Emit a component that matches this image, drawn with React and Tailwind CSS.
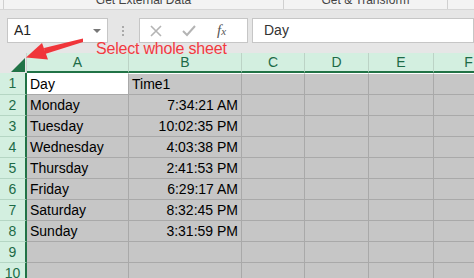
import React from 'react';

const columns = [
  { name: 'A', w: 'w-[102px]' },
  { name: 'B', w: 'w-[113px]' },
  { name: 'C', w: 'w-[63px]' },
  { name: 'D', w: 'w-[64px]' },
  { name: 'E', w: 'w-[65px]' },
  { name: 'F', w: 'w-[70px]' },
];

const data = [
  ['Day', 'Time1'],
  ['Monday', '7:34:21 AM'],
  ['Tuesday', '10:02:35 PM'],
  ['Wednesday', '4:03:38 PM'],
  ['Thursday', '2:41:53 PM'],
  ['Friday', '6:29:17 AM'],
  ['Saturday', '8:32:45 PM'],
  ['Sunday', '3:31:59 PM'],
  ['', ''],
  ['', ''],
];

const FormulaBar = () => (
  <div className="flex h-[43px] pt-[8px] bg-[#e6e6e6]">
    {/* name box */}
    <div className="ml-[7px] w-[101px] h-[25px] bg-white border border-[#c6c6c6] flex items-center justify-between pl-[6px] pr-[6px]">
      <span className="text-[14px] text-[#222]">A1</span>
      <span className="w-0 h-0 border-l-[4px] border-r-[4px] border-t-[4px] border-l-transparent border-r-transparent border-t-[#777]" />
    </div>
    {/* dots */}
    <div className="ml-[14px] w-[2px] h-[25px] flex flex-col justify-center gap-[2px]">
      <span className="w-[2px] h-[2px] bg-[#aaa]" />
      <span className="w-[2px] h-[2px] bg-[#aaa]" />
      <span className="w-[2px] h-[2px] bg-[#aaa]" />
    </div>
    {/* cancel / enter / fx */}
    <div className="ml-[15px] w-[109px] h-[25px] bg-white border border-[#c6c6c6] flex items-center">
      <svg width="12" height="12" viewBox="0 0 12 12" className="ml-[10px]">
        <path d="M1 1 L11 11 M11 1 L1 11" stroke="#b4b4b4" strokeWidth="1.6" fill="none" />
      </svg>
      <svg width="14" height="12" viewBox="0 0 14 12" className="ml-[20px]">
        <path d="M1 6 L5 10 L13 1" stroke="#b4b4b4" strokeWidth="2" fill="none" />
      </svg>
      <span className="ml-[21px] font-['Liberation_Serif',serif] italic text-[15px] text-[#555] leading-none">
        f<span className="text-[11px]">x</span>
      </span>
    </div>
    {/* formula input */}
    <div className="ml-[4px] flex-1 h-[25px] bg-white border border-[#c6c6c6] flex items-center pl-[11px]">
      <span className="text-[14px] text-[#333]">Day</span>
    </div>
  </div>
);

const Grid = () => (
  <div className="flex flex-col">
    {/* header row */}
    <div className="flex h-[20px]">
      <div className="w-[27px] h-[20px] bg-[#e6e6e6] border-r border-[#d0d0d0] relative flex-none">
        <svg width="14" height="14" viewBox="0 0 14 14" className="absolute right-[1px] bottom-[1px]">
          <polygon points="14,0 14,14 0,14" fill="#217346" />
        </svg>
      </div>
      {columns.map((c) => (
        <div
          key={c.name}
          className={`${c.w} flex-none h-[20px] bg-[#d3efe0] border-r border-[#bcd3c6] border-b-2 border-b-[#217346] flex items-center justify-center text-[14px] text-[#1d6b47]`}
        >
          {c.name}
        </div>
      ))}
    </div>
    {data.map((row, i) => (
      <div key={i} className={`flex ${i === 0 ? 'h-[22px]' : 'h-[21px]'}`}>
        <div className="w-[27px] flex-none bg-[#d3efe0] border-r-2 border-[#217346] border-b border-b-[#b5d6c4] flex items-center justify-center text-[14px] text-[#1d6b47]">
          {i + 1}
        </div>
        {columns.map((c, j) => {
          const active = i === 0 && j === 0;
          const value = j < 2 ? row[j] : '';
          const right = i > 0 && j === 1;
          return (
            <div
              key={c.name}
              className={`${c.w} flex-none border-r border-b border-[#a9a9a9] ${
                i === 0 ? 'border-t border-t-white' : ''
              } ${active ? 'bg-white' : 'bg-[#c6c6c6]'} flex items-center ${
                right ? 'justify-end pr-[3px]' : 'pl-[3px]'
              } text-[14px] text-black whitespace-nowrap`}
            >
              {value}
            </div>
          );
        })}
      </div>
    ))}
  </div>
);

export default function App() {
  return (
    <div className="relative w-[474px] h-[278px] overflow-hidden bg-[#e6e6e6] font-['Liberation_Sans',Arial,sans-serif]">
      {/* ribbon group labels, cut off at the top */}
      <div className="flex h-[10px] bg-[#f3f3f3] border-b border-[#d6d6d6] overflow-hidden text-[12px] text-[#444] leading-none">
        <div className="w-[4px] border-r border-[#d0d0d0]" />
        <div className="w-[280px] border-r border-[#d0d0d0] text-center -mt-[6px]">Get External Data</div>
        <div className="w-[164px] border-r border-[#d0d0d0] text-center -mt-[6px]">Get &amp; Transform</div>
      </div>
      <FormulaBar />
      <Grid />

      {/* annotation */}
      <svg className="absolute inset-0 pointer-events-none" width="474" height="278">
        <polygon points="83,38.5 83,42 45,54 44,48" fill="#f0353a" />
        <polygon points="26,57.5 42,43 48,59.5" fill="#f0353a" />
      </svg>
      <div className="absolute left-[96px] top-[41px] text-[16px] leading-none text-[#f23a3f] whitespace-nowrap tracking-[-0.2px]">
        Select whole sheet
      </div>
    </div>
  );
}
